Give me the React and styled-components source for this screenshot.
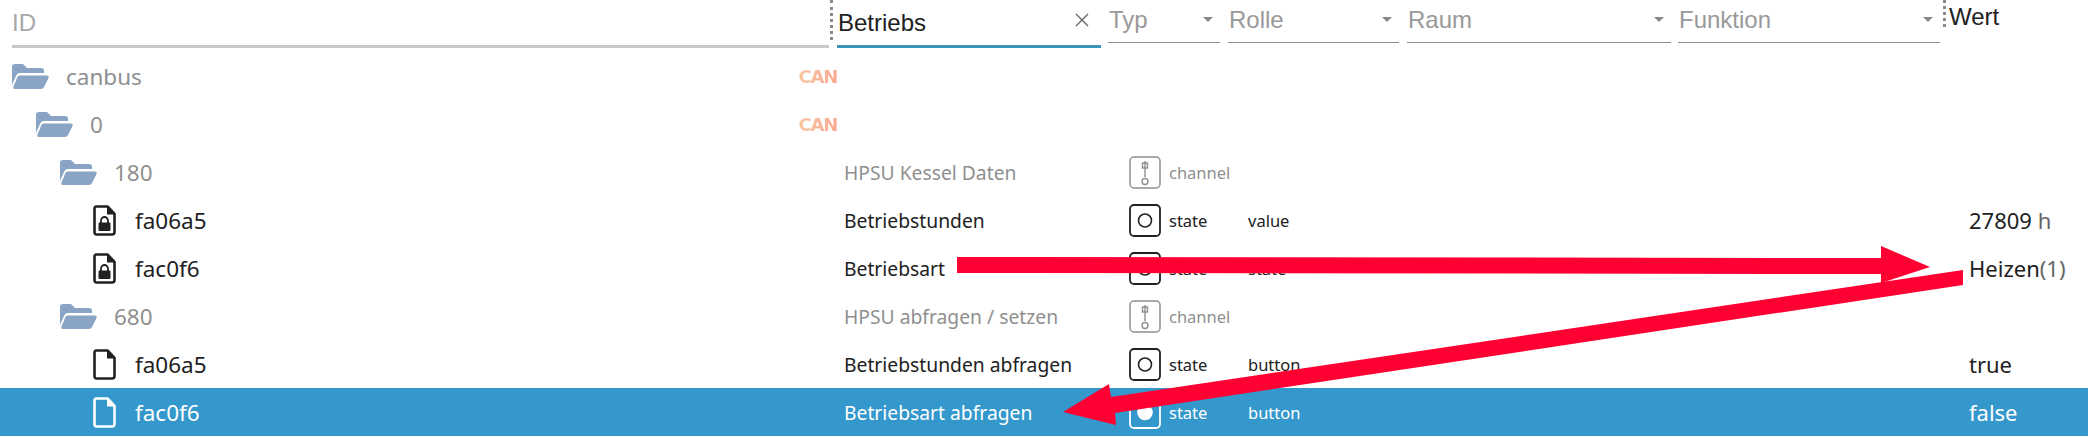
import React from 'react';
import styled, { createGlobalStyle } from 'styled-components';

const BLUE = '#3498cc';
const RED = '#ff0033';
const ROW_FONT = '"Noto Sans", "DejaVu Sans", sans-serif';

const GlobalStyle = createGlobalStyle`
  html, body {
    margin: 0;
    padding: 0;
    background: #fff;
  }
`;

const Page = styled.div`
  position: relative;
  width: 2088px;
  height: 438px;
  overflow: hidden;
  font-family: ${ROW_FONT};
`;

const Header = styled.div`
  display: flex;
  align-items: flex-start;
  height: 52px;
  padding-left: 12px;
  font-family: "Liberation Sans", Arial, sans-serif;
  font-size: 24px;
`;

const IdFilter = styled.div`
  box-sizing: border-box;
  width: 817px;
  height: 48px;
  padding-top: 9px;
  line-height: 28px;
  color: #a8a8a8;
  border-bottom: 3px solid #c9c9c9;
`;

const Handle = styled.div`
  flex: none;
  width: 0;
  height: ${props => props.h}px;
  margin: 0 ${props => props.mr}px 0 1px;
  border-left: 3px dotted #8a8a8a;
`;

const TextFilter = styled.div`
  box-sizing: border-box;
  display: flex;
  align-items: flex-start;
  justify-content: space-between;
  width: 264px;
  height: 48px;
  margin-right: 7px;
  padding: 9px 12px 0 1px;
  line-height: 28px;
  color: #212121;
  border-bottom: 3px solid #3a95b8;
`;

const ClearMark = styled.svg`
  margin-top: 4px;
`;

const Select = styled.div`
  box-sizing: border-box;
  display: flex;
  align-items: flex-start;
  justify-content: space-between;
  width: ${props => props.w}px;
  height: 43px;
  margin-right: ${props => props.mr}px;
  padding: 6px 7px 0 1px;
  line-height: 28px;
  color: #999;
  border-bottom: 1.5px solid #8e8e8e;
`;

const Caret = styled.span`
  width: 0;
  height: 0;
  margin-top: 11px;
  border-left: 5px solid transparent;
  border-right: 5px solid transparent;
  border-top: 5px solid #8a8a8a;
`;

const ValueTitle = styled.div`
  margin-top: 3px;
  line-height: 28px;
  color: #212121;
`;

const Row = styled.div`
  display: grid;
  grid-template-columns: 844px 285px 119px 721px 119px;
  align-items: center;
  height: 48px;
  color: ${props => props.selected ? '#fff' : props.muted ? '#8f8f8f' : '#212121'};
  background: ${props => props.selected ? BLUE : 'transparent'};
`;

const IdCell = styled.div`
  display: flex;
  align-items: center;
  padding-left: ${props => props.indent}px;
  padding-right: 7px;
`;

const IdText = styled.span`
  margin-left: ${props => props.gap}px;
  font-size: 22.5px;
  flex: 1;
`;

const Tag = styled.span`
  font-family: "DejaVu Sans", sans-serif;
  font-size: 18px;
  font-weight: 700;
  letter-spacing: -1.2px;
  background: linear-gradient(90deg, #f9c7a0, #fba893);
  -webkit-background-clip: text;
  background-clip: text;
  color: transparent;
`;

const NameCell = styled.div`
  font-size: 19.3px;
  white-space: nowrap;
`;

const TypeCell = styled.div`
  display: flex;
  align-items: center;
  gap: 8px;
  font-size: 16.5px;
`;

const RoleCell = styled.div`
  font-size: 16.5px;
`;

const ValueCell = styled.div`
  font-size: 22px;
  white-space: nowrap;
`;

const Dim = styled.span`
  color: #666;
`;

const ArrowLayer = styled.svg`
  position: absolute;
  top: 0;
  left: 0;
  pointer-events: none;
`;

const FolderIcon = () => (
  <svg width="38" height="25" viewBox="0 0 38 25" fill="#8aa4c6">
    <path d="M0 3Q0 0 3 0H11L15 4H29Q32 4 32 7V9H8Q5 9 4 12L0 21Z" />
    <path d="M7 11.5H35Q37.5 11.5 36.5 14L32 23Q31 25 29 25H3Q.5 25 1.5 22.5L5 14Q6 11.5 7 11.5Z" />
  </svg>
);

const FileIcon = ({ locked }) => (
  <svg width="23" height="31" viewBox="0 0 23 31" fill="none">
    <path
      d="M3.5 1.5H14.5L21.5 9V27Q21.5 29.5 19 29.5H3.5Q1.5 29.5 1.5 27V4Q1.5 1.5 3.5 1.5Z"
      stroke="currentColor"
      strokeWidth="2.6"
      strokeLinejoin="round"
    />
    <path d="M14 2V9.5H21.5Z" fill="currentColor" />
    {locked && (
      <g>
        <path d="M8 18V15.5A3.5 3.5 0 0 1 15 15.5V18" stroke="currentColor" strokeWidth="1.8" />
        <rect x="5.5" y="17.5" width="12" height="8.5" rx="1" fill="currentColor" />
      </g>
    )}
  </svg>
);

const TypeIcon = ({ kind, filled }) => (
  <svg width="32" height="33" viewBox="0 0 32 33" fill="none" stroke="currentColor">
    <rect x="1" y="1" width="30" height="31" rx="4" strokeWidth={kind === 'channel' ? 1.5 : 1.8} />
    {kind === 'channel' ? (
      <g strokeWidth="1.4">
        <path d="M16 5V21" />
        <rect x="13.5" y="7" width="5" height="5" />
        <circle cx="16" cy="25.5" r="3" />
      </g>
    ) : (
      <circle cx="16" cy="16.5" r={filled ? 7 : 6.5} strokeWidth="1.6" fill={filled ? 'currentColor' : 'none'} />
    )}
  </svg>
);

const rows = [
  { level: 0, folder: true, id: 'canbus', tag: 'CAN' },
  { level: 1, folder: true, id: '0', tag: 'CAN' },
  { level: 2, folder: true, id: '180', name: 'HPSU Kessel Daten', type: 'channel' },
  { level: 3, locked: true, id: 'fa06a5', name: 'Betriebstunden', type: 'state', role: 'value', value: <>27809<Dim> h</Dim></> },
  { level: 3, locked: true, id: 'fac0f6', name: 'Betriebsart', type: 'state', role: 'state', value: <>Heizen<Dim>(1)</Dim></> },
  { level: 2, folder: true, id: '680', name: 'HPSU abfragen / setzen', type: 'channel' },
  { level: 3, id: 'fa06a5', name: 'Betriebstunden abfragen', type: 'state', role: 'button', value: 'true' },
  { level: 3, selected: true, id: 'fac0f6', name: 'Betriebsart abfragen', type: 'state', role: 'button', value: 'false' }
];

export default function App() {
  return (
    <Page>
      <GlobalStyle />
      <Header>
        <IdFilter>ID</IdFilter>
        <Handle h={40} mr={4} />
        <TextFilter>
          Betriebs
          <ClearMark width="14" height="14" viewBox="0 0 14 14" stroke="#666" strokeWidth="1.4">
            <path d="M1 1L13 13M13 1L1 13" />
          </ClearMark>
        </TextFilter>
        <Select w={112} mr={8}>Typ<Caret /></Select>
        <Select w={171} mr={8}>Rolle<Caret /></Select>
        <Select w={264} mr={7}>Raum<Caret /></Select>
        <Select w={262} mr={2}>Funktion<Caret /></Select>
        <Handle h={27} mr={3} />
        <ValueTitle>Wert</ValueTitle>
      </Header>
      {rows.map((row, i) => (
        <Row key={i} selected={row.selected} muted={row.folder}>
          <IdCell indent={row.folder ? 12 + row.level * 24 : 93}>
            {row.folder ? <FolderIcon /> : <FileIcon locked={row.locked} />}
            <IdText gap={row.folder ? 16 : 19}>{row.id}</IdText>
            {row.tag && <Tag>{row.tag}</Tag>}
          </IdCell>
          <NameCell>{row.name}</NameCell>
          <TypeCell>
            {row.type && <TypeIcon kind={row.type} filled={row.selected} />}
            {row.type}
          </TypeCell>
          <RoleCell>{row.role}</RoleCell>
          <ValueCell>{row.value}</ValueCell>
        </Row>
      ))}
      <ArrowLayer width="2088" height="438" fill={RED}>
        <polygon points="957,257 1881,258 1881,246 1930,267 1881,283 1881,274 957,273" />
        <polygon points="1963,270 1963,285 1115,413 1116,425 1063,412 1109,384 1111,397" />
      </ArrowLayer>
    </Page>
  );
}
